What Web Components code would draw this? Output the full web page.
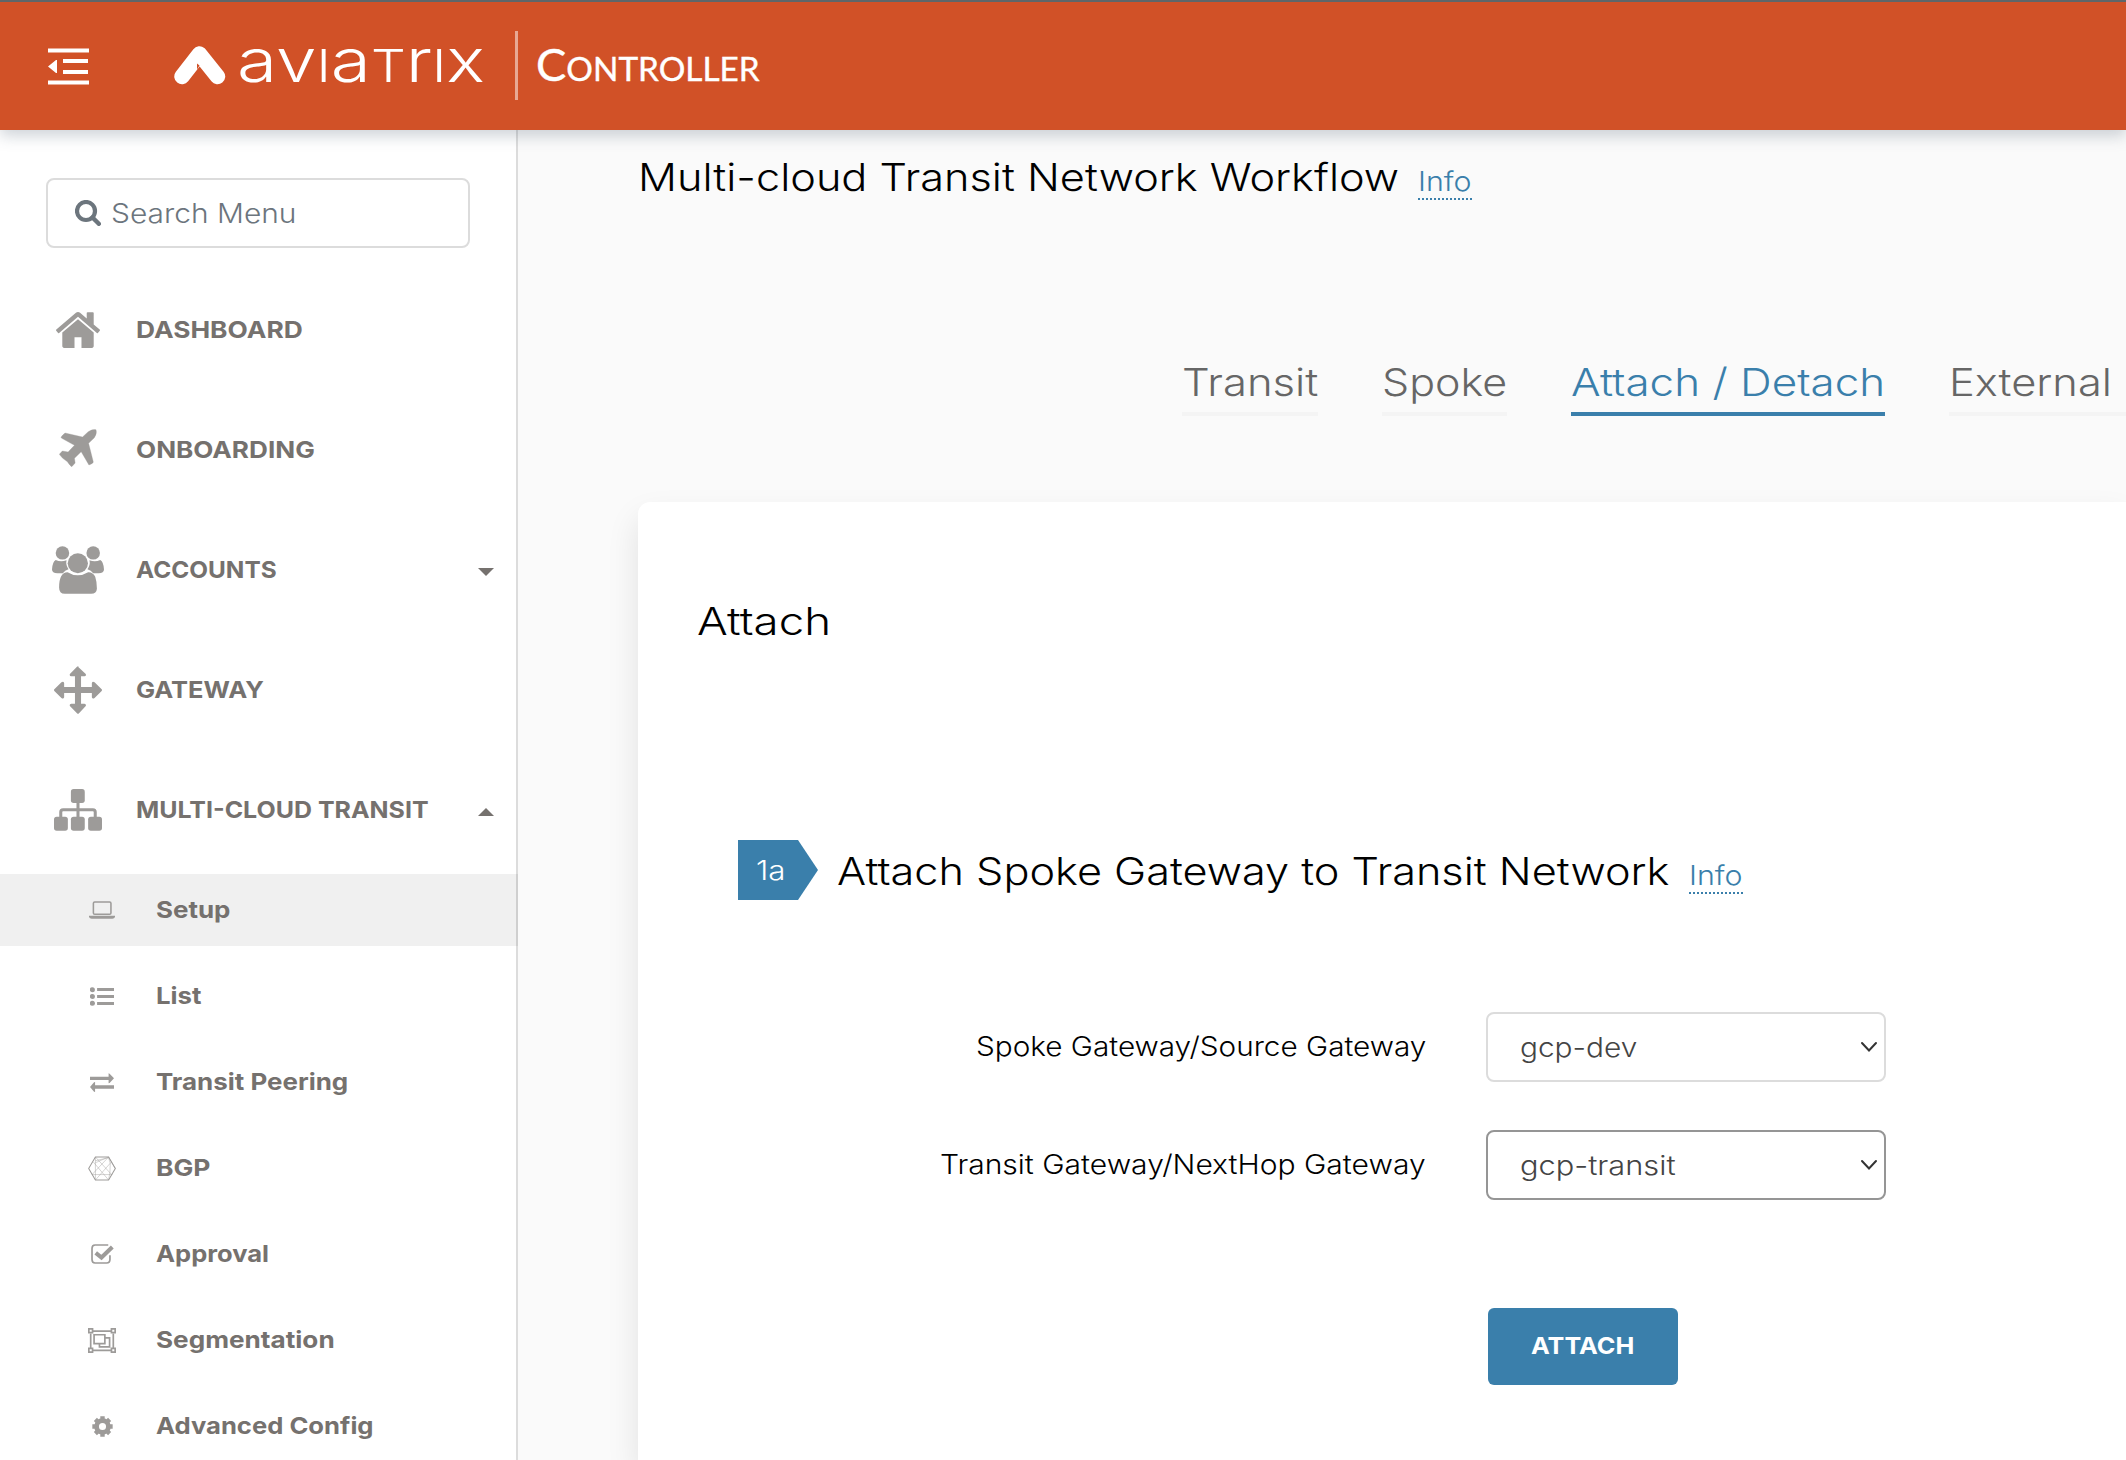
<!DOCTYPE html>
<html lang="en">
<head>
<meta charset="utf-8">
<title>Aviatrix Controller</title>
<style>
html,body{margin:0;height:100%;overflow:hidden;background:#fafafa;font-family:Inter,"Open Sans",sans-serif}
</style>
</head>
<body>
<av-app></av-app>
<script>
const define=(name,html,after)=>{
  const t=document.createElement('template');
  t.innerHTML=html;
  customElements.define(name,class extends HTMLElement{
    connectedCallback(){
      if(!this.shadowRoot){
        this.attachShadow({mode:'open'}).append(t.content.cloneNode(true));
      }
      if(after)after(this,this.shadowRoot);
    }
  });
};

/* Text drawn at a fixed width: glyphs are stretched horizontally to fill it. */
define('fit-text',`<style>
:host{display:inline-block;white-space:nowrap;flex:none}
span{display:inline-block;transform-origin:0 50%;white-space:pre}
</style><span><slot></slot></span>`,(h,r)=>{
  const w=+h.getAttribute('w'),s=r.querySelector('span');
  h.style.width=w+'px';
  s.style.transform='scaleX('+w/s.offsetWidth+')';
});

/* name: [width, height, viewBox, shapes] */
const ICONS={
 menu:[41,37,'48 48 41 37','<path d="M48 48.6h41v3.8H48zM63 59h25v4H63zM63 70h25v4H63zM48 80.6h41v3.8H48zM48 66.5 56 60h1v13h-1z"/>'],
 mark:[52,40,'174 45 52 40','<path d="M182 76.5 199.5 54 217.5 76.5" fill="none" stroke="currentColor" stroke-width="15.5" stroke-linecap="round" stroke-linejoin="round"/><path d="M197 63.5l2.5 2-2.5 4z" fill="#d15127"/>'],
 search:[26,26,'0 0 26 26','<circle cx="11" cy="11" r="9" fill="none" stroke="currentColor" stroke-width="4.2"/><path d="M17.5 17.5l6.3 6.3" stroke="currentColor" stroke-width="4.4" stroke-linecap="round"/>'],
 home:[44,36,'89 250 1614 1290','<path d="M1472 992v480q0 26-19 45t-45 19h-384v-384h-256v384h-384q-26 0-45-19t-19-45v-480q0-1 .5-3t.5-3l575-474 575 474q1 2 1 6zm223-69l-62 74q-8 9-21 11h-3q-13 0-21-7l-692-577-692 577q-12 8-24 7-13-2-21-11l-62-74q-8-10-7-23.5t11-21.5l719-599q32-26 76-26t76 26l244 204v-195q0-14 9-23t23-9h192q14 0 23 9t9 23v408l219 182q10 8 11 21.5t-7 23.5z"/>'],
 plane:[38,38,'175 837 113 114','<path d="M193 849 245 861 262 845Q275 836 285 839 289 850 280 863L263 880 277 936Q277 940 264 945L241 905 221 925 223 939 213 950Q209 949 200 935 184 926 176 913L185 903 202 906 221 886 182 864Q178 862 193 849Z" stroke="currentColor" stroke-width="1"/>'],
 users:[52,48,'154 167 154 145','<circle cx="185" cy="188" r="20"/><circle cx="276" cy="188" r="20"/><circle cx="230.5" cy="219" r="30"/><path d="M165 209Q180 217 197 210 194 224 203 237 192 240 186 249H170Q154 249 154 238 155 215 165 209z"/><path d="M297 209Q282 217 265 210 268 224 259 237 270 240 276 249H292Q308 249 308 238 307 215 297 209z"/><path d="M200 246Q230 265 261 246 275 245 282 260 287 275 287 296 286 311 270 311H192Q175 311 175 292 175 247 200 246z"/>'],
 move:[48,48,'160 527 142 144','<path d="M231 529 254 551Q256 557 250 558H240V590H272V578Q274 572 280 576L301 597Q303 599 301 602L280 623Q274 627 272 621V608H240V640H250Q256 641 254 647L234 669Q231 672 228 669L207 647Q205 641 211 640H222V608H190V621Q188 627 182 623L161 602Q159 599 161 597L182 576Q188 572 190 578V590H222V558H211Q205 557 207 551L228 529Q231 526 234 529z"/>'],
 sitemap:[48,42,'160 897 142 126','<rect x="210" y="897" width="41" height="42" rx="8"/><rect x="160" y="980" width="41" height="42" rx="8"/><rect x="210" y="980" width="41" height="42" rx="8"/><rect x="261" y="980" width="41" height="42" rx="8"/><path d="M231 935V985M180 985V966Q180 959 187 959H275Q282 959 282 966V985" fill="none" stroke="currentColor" stroke-width="9"/>'],
 laptop:[26,18,'263 154 77 54','<rect x="276" y="157" width="52" height="37" rx="4" fill="none" stroke="currentColor" stroke-width="4.6"/><path d="M263 198H340V202Q338 207 332 207H271Q265 207 263 202z"/>'],
 list:[24,19,'266 411 71 57','<circle cx="273" cy="419" r="7.5"/><circle cx="273" cy="439.5" r="7.5"/><circle cx="273" cy="460" r="7.5"/><path d="M287 414h50v9h-50zM287 435h50v9h-50zM287 456h50v9h-50z"/>'],
 swap:[24,19,'266 671 71 57','<path d="M266 682H321V672L324 673 337 687 324 701 321 702V692H266zM337 708H281V698L278 699 266 713 278 727 281 728V718H337z"/>'],
 hex:[28,25,'260 18 83 74','<g fill="none" stroke="currentColor"><path d="M262 55 282 21H321L341 55 321 89H282z" stroke-width="3"/><path d="M282 21V89M282 21 330 73M321 21 272 73M272 73H332M282 89 329 36M321 89 276 36M282 32 321 23 326 40 325 66 321 89M282 38 321 21 341 55" stroke-width="1.6" opacity=".8"/></g>'],
 check:[23,20,'267 281 68 59','<path d="M318 284H279Q270 284 270 294V327Q270 337 279 337H313Q323 337 323 327V314" fill="none" stroke="currentColor" stroke-width="5"/><path d="M281 307 298 321 330 290" fill="none" stroke="currentColor" stroke-width="12"/>'],
 group:[28,25,'260 534 83 74','<g fill="none" stroke="currentColor" stroke-width="5"><path d="M274 543H329M274 600H329M268 550V593M335 550V593"/><path d="M262.5 536.5h11v11h-11zM329.500 536.5h11v11h-11zM262.500 594.5h11v11h-11zM329.500 594.5h11v11h-11zM278 554h32v26h-32zM311 563H324V590H294V581"/></g>'],
 gear:[21,21,'271 798 62 62','<circle cx="302" cy="829" r="17.5" fill="none" stroke="currentColor" stroke-width="14"/><path d="M302 799v12M302 847v12M272 829h12M320 829h12M281 808l8 8M315 842l8 8M323 808l-8 8M289 842l-8 8" stroke="currentColor" stroke-width="13"/>'],
 chevron:[18,12,'0 0 18 12','<path d="M2 2 9 9.5 16 2" fill="none" stroke="#333" stroke-width="2" stroke-linecap="round"/>'],
 down:[16,8,'0 0 16 8','<path d="M0 0H16L8 8z"/>'],
 up:[16,8,'0 0 16 8','<path d="M0 8H16L8 0z"/>']
};
define('ui-icon',`<style>:host{display:flex;flex:none}svg{display:block;fill:currentColor}</style>`,(h,r)=>{
  const [w,ht,vb,s]=ICONS[h.getAttribute('name')];
  r.innerHTML+=`<svg width="${w}" height="${ht}" viewBox="${vb}" preserveAspectRatio="none">${s}</svg>`;
});

define('info-link',`<style>
:host{display:inline-block;color:#3a7fab;font-size:27px;line-height:32px;font-weight:300;border-bottom:2px dotted #3a7fab}
</style><fit-text w="54">Info</fit-text>`);

define('av-header',`<style>
:host{display:flex;align-items:center;box-sizing:border-box;height:130px;border-top:2px solid #5e6669;background:#d15127;color:#fff;padding-left:48px;position:relative;z-index:2;box-shadow:0 6px 14px rgba(70,90,110,.26);flex:none}
.mark{margin:-2px 0 0 85px}
.word{margin:-6px 0 0 11px;font-weight:300;font-size:60px;line-height:60px}
.t{font-size:45px;text-transform:uppercase}
i{width:3px;height:69px;background:rgba(255,255,255,.5);margin:-1px 18px 0 30px}
.prod{font-family:Lato,sans-serif;font-size:33px;line-height:60px;-webkit-text-stroke:.4px #fff}
.c{font-size:45px}
</style>
<ui-icon name="menu"></ui-icon><ui-icon class="mark" name="mark"></ui-icon>
<div class="word"><fit-text w="248">av<span class="t">i</span>a<span class="t">t</span>r<span class="t">i</span>x</fit-text></div>
<i></i><fit-text class="prod" w="224">
<span class="c">C</span>ONTROLLER</fit-text>`.replace('w="224">\n','w="224">'));

define('nav-item',`<style>
:host{display:flex;align-items:center;height:120px;padding:0 22px 0 52px;color:#75716e;font-weight:700;font-size:23.5px;line-height:40px}
.i{width:52px;display:flex;justify-content:center;color:#9d9b99;margin-right:32px}
.g{flex:1}
.caret{margin-top:4px}
:host([sub]){height:72px;padding-left:88px;margin-bottom:14px}
:host([sub]) .i{width:28px;margin-right:40px}
:host([active]){background:#f0f0f0;margin-right:-2px;border-right:2px solid #cfcfcf}
</style><div class="i"></div><slot></slot><div class="g"></div><div class="caret"></div>`,(h,r)=>{
  r.querySelector('.i').innerHTML=`<ui-icon name="${h.getAttribute('icon')}"></ui-icon>`;
  if(h.getAttribute('icon')==='plane')r.querySelector('.i').style.marginTop='-4px';
  const c=h.getAttribute('caret');
  if(c)r.querySelector('.caret').innerHTML=`<ui-icon name="${c}"></ui-icon>`;
});

define('av-sidebar',`<style>
:host{display:block;box-sizing:border-box;width:518px;flex:none;background:#fff;border-right:2px solid #dcdcdc;padding-top:48px}
.search{box-sizing:border-box;width:424px;height:70px;margin:0 0 22px 46px;border:2px solid #dcdcdc;border-radius:8px;display:flex;align-items:center;padding-left:27px;color:#6c757d;font-size:27px;font-weight:300;gap:10px}
.top{display:block;margin-bottom:4px}
</style>
<div class="search"><ui-icon name="search"></ui-icon><fit-text w="185">Search Menu</fit-text></div>
<nav class="top">
<nav-item icon="home"><fit-text w="167">DASHBOARD</fit-text></nav-item>
<nav-item icon="plane"><fit-text w="179">ONBOARDING</fit-text></nav-item>
<nav-item icon="users" caret="down"><fit-text w="141">ACCOUNTS</fit-text></nav-item>
<nav-item icon="move"><fit-text w="128">GATEWAY</fit-text></nav-item>
<nav-item icon="sitemap" caret="up"><fit-text w="293">MULTI-CLOUD TRANSIT</fit-text></nav-item>
</nav>
<nav>
<nav-item sub active icon="laptop"><fit-text w="74">Setup</fit-text></nav-item>
<nav-item sub icon="list"><fit-text w="45">List</fit-text></nav-item>
<nav-item sub icon="swap"><fit-text w="192">Transit Peering</fit-text></nav-item>
<nav-item sub icon="hex"><fit-text w="54">BGP</fit-text></nav-item>
<nav-item sub icon="check"><fit-text w="113">Approval</fit-text></nav-item>
<nav-item sub icon="group"><fit-text w="179">Segmentation</fit-text></nav-item>
<nav-item sub icon="gear"><fit-text w="218">Advanced Config</fit-text></nav-item>
</nav>`);

define('tab-item',`<style>
:host{display:block;flex:none;font-size:38.5px;line-height:60px;height:60px;font-weight:300;color:#666;border-bottom:4px solid #f4f4f4}
:host([active]){color:#3a7fab;border-color:#3a7fab}
</style><slot></slot>`);

define('step-title',`<style>
:host{display:flex;align-items:center;gap:19px;height:60px}
.b{width:80px;height:60px;background:#3a7fab;clip-path:polygon(0 0,60px 0,100% 50%,60px 100%,0 100%);color:#fff;font-size:27px;line-height:61px;font-weight:300;box-sizing:border-box;padding-left:18px}
.t{display:flex;align-items:baseline;gap:20px;font-size:38.5px;line-height:60px;margin-top:2px}
</style><div class="b"><fit-text w="29">1a</fit-text></div><div class="t"><slot></slot><info-link></info-link></div>`);

define('select-row',`<style>
:host{display:grid;grid-template-columns:728px 400px;column-gap:60px;align-items:center;height:70px}
.l{display:flex;justify-content:flex-end;font-size:27px;line-height:40px;font-weight:350;margin-top:-1px}
.s{box-sizing:border-box;height:70px;border:2px solid #dcdcdc;border-radius:8px;display:flex;align-items:center;justify-content:space-between;padding:0 6px 0 32px;color:#444;font-size:27px;line-height:40px;font-weight:300;background:#fff}
.v{padding-top:2px}
:host([focused]) .s{border-color:#959595}
</style><div class="l"><slot name="label"></slot></div><div class="s"><div class="v"><slot></slot></div><ui-icon name="chevron"></ui-icon></div>`);

define('primary-button',`<style>
:host{display:flex;align-items:center;justify-content:center;box-sizing:border-box;width:190px;height:77px;border-radius:6px;background:#3a7fab;color:#fff;font-weight:700;font-size:23.5px;padding:0 2px 2px 0}
</style><slot></slot>`);

define('av-workflow',`<style>
:host{display:flex;flex-direction:column;flex:1;min-width:0;overflow:hidden;background:#fafafa;font-weight:300;color:#000}
.head{display:flex;align-items:baseline;gap:19px;margin:17px 0 0 120px;font-size:38.5px;line-height:60px}
.tabs{display:flex;gap:64px;margin:145px 0 0 664px}
.card{flex:1;box-sizing:border-box;margin:86px 0 0 120px;background:#fff;border-radius:12px 0 0 0;box-shadow:0 16px 32px rgba(0,0,0,.1);padding:89px 0 0 59px;font-size:38.5px;line-height:60px}
.card>fit-text{display:block}
step-title{margin:189px 0 112px 41px}
select-row{margin-left:1px}
select-row+select-row{margin-top:48px}
primary-button{margin:108px 0 0 791px}
</style>
<div class="head"><fit-text w="761">Multi-cloud Transit Network Workflow</fit-text><info-link></info-link></div>
<div class="tabs">
<tab-item><fit-text w="136">Transit</fit-text></tab-item>
<tab-item><fit-text w="125">Spoke</fit-text></tab-item>
<tab-item active><fit-text w="314">Attach / Detach</fit-text></tab-item>
<tab-item><fit-text w="407">External Connection</fit-text></tab-item>
</div>
<div class="card"><fit-text w="134">Attach</fit-text>
<step-title><fit-text w="832">Attach Spoke Gateway to Transit Network</fit-text></step-title>
<select-row><fit-text slot="label" w="450">Spoke Gateway/Source Gateway</fit-text><fit-text w="117">gcp-dev</fit-text></select-row>
<select-row focused><fit-text slot="label" w="486">Transit Gateway/NextHop Gateway</fit-text><fit-text w="156">gcp-transit</fit-text></select-row>
<primary-button><fit-text w="103">ATTACH</fit-text></primary-button>
</div>`);

define('av-app',`<style>
:host{display:flex;flex-direction:column;height:1460px;width:2126px;overflow:hidden}
.body{display:flex;flex:1;min-height:0}
</style><av-header></av-header><div class="body"><av-sidebar></av-sidebar><av-workflow></av-workflow></div>`);
</script>
</body>
</html>
